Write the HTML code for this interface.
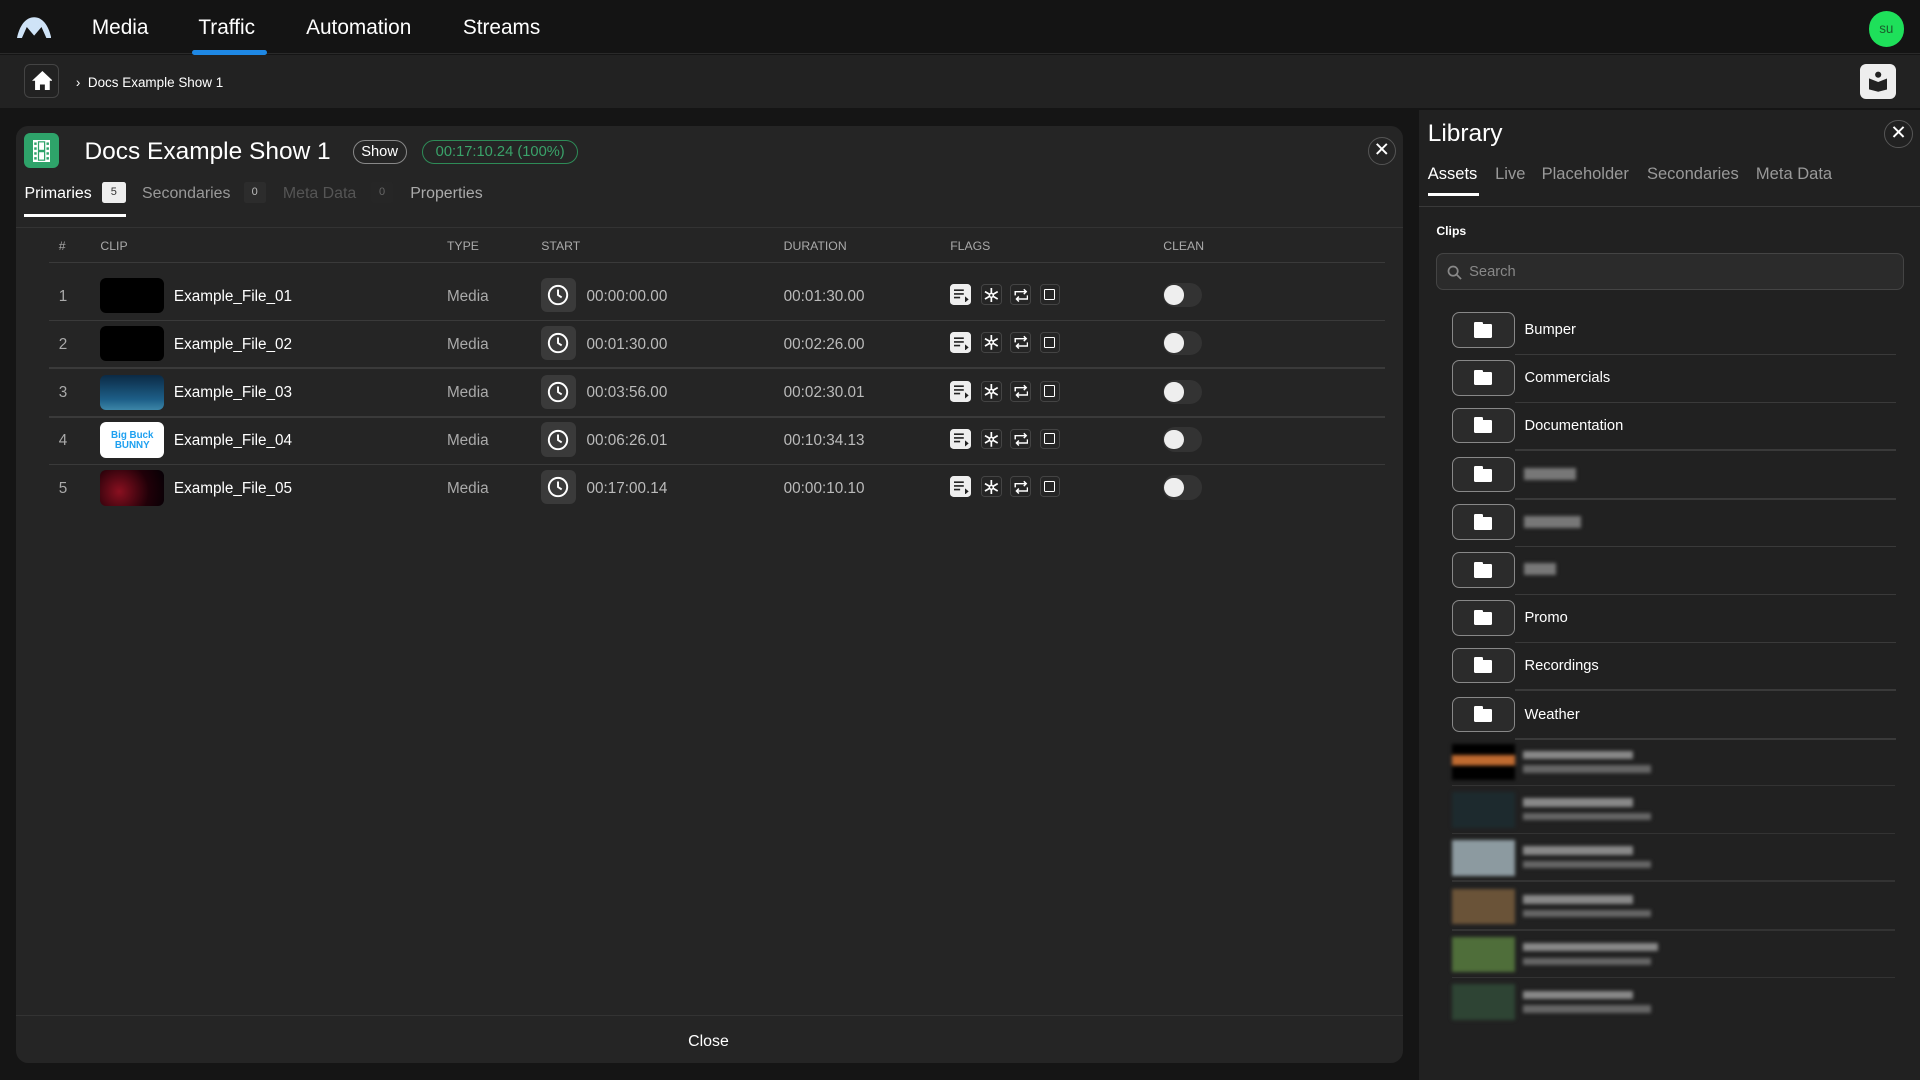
<!DOCTYPE html>
<html><head><meta charset="utf-8"><style>
html{zoom:1.22449}
*{box-sizing:border-box;margin:0;padding:0}
body{width:1568px;height:882px;background:#151515;font-family:"Liberation Sans",sans-serif;color:#fff;position:relative;overflow:hidden}
.a{position:absolute}
.nav{left:0;top:0;width:1568px;height:44px;background:#141414;border-bottom:1px solid #2a2a2a}
.nav span{position:absolute;top:13px;font-size:17px;color:#fff}
.crumb{left:0;top:45px;width:1568px;height:43px;background:#222}
.panel{left:13px;top:103px;width:1133px;height:765px;background:#252525;border-radius:10px}
.lib{left:1159px;top:90px;width:409px;height:792px;background:#212121}
.th{top:195px;font-size:10px;color:#aaa}
.row{font-size:12.5px}
.thumb{width:52px;height:29px;border-radius:5px;background:#000}
.clk{width:28px;height:28px;border-radius:5px;background:#3a3a3a}
.fl{width:17px;height:17px;border-radius:3px;border:1px solid #444}
.tg{width:32px;height:20px;border-radius:10px;background:#333}
.tg:before{content:"";position:absolute;left:1px;top:2px;width:16px;height:16px;border-radius:50%;background:#eee}
.fb{width:51px;height:29px;border:1px solid #888;border-radius:6px;background:#2b2b2b}
.fb:before{content:"";position:absolute;left:17px;top:9px;width:15px;height:11px;background:#fff;border-radius:1px}
.fb:after{content:"";position:absolute;left:17px;top:7px;width:7px;height:3px;background:#fff;border-radius:1px 1px 0 0}
.bl{filter:blur(1.5px)}
</style></head><body>
<div class="a nav">
<svg class="a" style="left:14px;top:13px" width="28" height="18" viewBox="0 0 28 18"><path d="M0 18 C2 8 7 1 14 1 C21 1 26 8 28 18 L24 18 L20 9 L14 16 L8 9 L4 18Z" fill="#cfe3f7"/></svg>
<span style="left:75px">Media</span><span style="left:162px">Traffic</span><span style="left:250px">Automation</span><span style="left:378px">Streams</span>
<div class="a" style="left:157px;top:41px;width:61px;height:4px;background:#1e88e5;border-radius:2px"></div>
<div class="a" style="left:1526px;top:9px;width:29px;height:29px;border-radius:50%;background:#1ee05a;color:#1a5e2d;font-size:11px;text-align:center;line-height:29px">su</div>
</div>
<div class="a crumb">
<div class="a" style="left:20px;top:7px;width:28px;height:28px;border:1px solid #444;border-radius:5px"><svg class="a" style="left:5px;top:5px" width="17" height="16" viewBox="0 0 17 16"><path d="M8.5 0 L17 8 L14.5 8 L14.5 16 L10.5 16 L10.5 11 L6.5 11 L6.5 16 L2.5 16 L2.5 8 L0 8Z" fill="#fff"/></svg></div>
<div class="a" style="left:62px;top:16px;font-size:11px">›&nbsp; Docs Example Show 1</div>
<div class="a" style="left:1519px;top:7px;width:29px;height:29px;background:#eee;border-radius:5px"><svg class="a" style="left:7px;top:6px" width="15" height="17" viewBox="0 0 15 17"><circle cx="7.5" cy="3" r="2.5" fill="#222"/><path d="M0 6 L7.5 9 L15 6 L15 15 L7.5 17 L0 15Z" fill="#222"/></svg></div>
</div>
<div class="a panel"></div>
<div class="a" style="left:20px;top:109px;width:28px;height:28px;background:#2ea36a;border-radius:5px"><svg class="a" style="left:7px;top:5px" width="14" height="18" viewBox="0 0 14 18"><rect width="14" height="18" fill="#fff"/><rect x="4" y="1" width="6" height="16" fill="#2ea36a"/><rect x="1" y="2" width="2" height="2" fill="#2ea36a"/><rect x="1" y="6" width="2" height="2" fill="#2ea36a"/><rect x="1" y="10" width="2" height="2" fill="#2ea36a"/><rect x="1" y="14" width="2" height="2" fill="#2ea36a"/><rect x="11" y="2" width="2" height="2" fill="#2ea36a"/><rect x="11" y="6" width="2" height="2" fill="#2ea36a"/><rect x="11" y="10" width="2" height="2" fill="#2ea36a"/><rect x="11" y="14" width="2" height="2" fill="#2ea36a"/><rect x="5" y="2" width="4" height="6" fill="#fff"/><rect x="5" y="10" width="4" height="6" fill="#fff"/></svg></div>
<div class="a" style="left:69px;top:113px;font-size:20px">Docs Example Show 1</div>
<div class="a" style="left:288px;top:114px;width:44px;height:20px;border:1px solid #888;border-radius:10px;font-size:12px;text-align:center;line-height:19px">Show</div>
<div class="a" style="left:345px;top:114px;width:127px;height:20px;border:1px solid #2e8b57;border-radius:10px;font-size:12px;color:#3aa36a;text-align:center;line-height:19px">00:17:10.24 (100%)</div>
<div class="a" style="left:1117px;top:112px;width:23px;height:23px;border:1px solid #555;border-radius:50%;text-align:center;line-height:21px;font-size:16px">✕</div>
<div class="a" style="left:20px;top:151px;font-size:13px">Primaries</div>
<div class="a" style="left:83px;top:149px;width:20px;height:17px;background:#eee;color:#333;border-radius:2px;font-size:9px;text-align:center;line-height:17px">5</div>
<div class="a" style="left:116px;top:151px;font-size:13px;color:#999">Secondaries</div>
<div class="a" style="left:199px;top:149px;width:18px;height:17px;background:#2c2c2c;color:#bbb;border-radius:2px;font-size:9px;text-align:center;line-height:17px">0</div>
<div class="a" style="left:231px;top:151px;font-size:13px;color:#555">Meta Data</div>
<div class="a" style="left:303px;top:149px;width:18px;height:17px;background:#262626;color:#666;border-radius:2px;font-size:9px;text-align:center;line-height:17px">0</div>
<div class="a" style="left:335px;top:151px;font-size:13px;color:#aaa">Properties</div>
<div class="a" style="left:20px;top:175px;width:83px;height:2px;background:#fff"></div>
<div class="a" style="left:13px;top:185px;width:1133px;height:1px;background:#333"></div>
<div class="a th" style="left:48px">#</div><div class="a th" style="left:82px">CLIP</div><div class="a th" style="left:365px">TYPE</div><div class="a th" style="left:442px">START</div><div class="a th" style="left:640px">DURATION</div><div class="a th" style="left:776px">FLAGS</div><div class="a th" style="left:950px">CLEAN</div>
<div class="a" style="left:40px;top:214px;width:1091px;height:1px;background:#3a3a3a"></div>
<div id="rows"></div>
<div class="a" style="left:13px;top:829px;width:1133px;height:1px;background:#333"></div>
<div class="a" style="left:562px;top:844px;font-size:13px">Close</div>

<div class="a lib"></div>
<div class="a" style="left:1166px;top:98px;font-size:20px">Library</div>
<div class="a" style="left:1539px;top:98px;width:23px;height:23px;border:1px solid #555;border-radius:50%;text-align:center;line-height:21px;font-size:16px">✕</div>
<div class="a" style="left:1166px;top:134px;font-size:13.5px">Assets</div>
<div class="a" style="left:1221px;top:134px;font-size:13.5px;color:#999">Live</div>
<div class="a" style="left:1259px;top:134px;font-size:13.5px;color:#999">Placeholder</div>
<div class="a" style="left:1345px;top:134px;font-size:13.5px;color:#999">Secondaries</div>
<div class="a" style="left:1434px;top:134px;font-size:13.5px;color:#999">Meta Data</div>
<div class="a" style="left:1166px;top:158px;width:42px;height:2px;background:#fff"></div>
<div class="a" style="left:1159px;top:168px;width:409px;height:1px;background:#3a3a3a"></div>
<div class="a" style="left:1173px;top:183px;font-size:10px;font-weight:bold">Clips</div>
<div class="a" style="left:1173px;top:207px;width:382px;height:30px;background:#2b2b2b;border:1px solid #444;border-radius:6px"><svg class="a" style="left:8px;top:9px" width="12" height="12" viewBox="0 0 12 12"><circle cx="5" cy="5" r="3.8" fill="none" stroke="#888" stroke-width="1.4"/><path d="M8 8 L11.5 11.5" stroke="#888" stroke-width="1.4"/></svg><span class="a" style="left:26px;top:8px;font-size:12px;color:#888">Search</span></div>
<div id="lib"></div>
<script>
var r='',ys=[241,280,320,359,398],st=['00:00:00.00','00:01:30.00','00:03:56.00','00:06:26.01','00:17:00.14'],du=['00:01:30.00','00:02:26.00','00:02:30.01','00:10:34.13','00:00:10.10'],
th=['#000','#000','linear-gradient(180deg,#0b2a45,#1d5f88 70%,#3d86a8)','#fff','radial-gradient(circle at 30% 60%,#8a1020,#200008 60%,#050005)'];
var snow='<svg class="a" style="left:2px;top:2px" width="12" height="12" viewBox="0 0 12 12"><g stroke="#fff" stroke-width="1.4" fill="none"><path d="M6 0V12M0.8 3L11.2 9M0.8 9L11.2 3"/></g><circle cx="6" cy="6" r="2.2" fill="#fff"/><circle cx="6" cy="6" r="1" fill="#252525"/></svg>';
for(var i=0;i<5;i++){var y=ys[i];
r+='<div class="a row" style="left:48px;top:'+(y-6)+'px;color:#aaa">'+(i+1)+'</div>';
r+='<div class="a thumb" style="left:82px;top:'+(y-14)+'px;background:'+th[i]+'">'+(i==3?'<div style="color:#1ea0f0;font-size:8px;font-weight:bold;text-align:center;line-height:8px;padding-top:7px">Big Buck<br>BUNNY</div>':'')+'</div>';
r+='<div class="a row" style="left:142px;top:'+(y-6)+'px">Example_File_0'+(i+1)+'</div>';
r+='<div class="a row" style="left:365px;top:'+(y-6)+'px;color:#aaa">Media</div>';
r+='<div class="a clk" style="left:442px;top:'+(y-14)+'px"><svg class="a" style="left:5px;top:5px" width="18" height="18" viewBox="0 0 18 18"><circle cx="9" cy="9" r="7.5" fill="none" stroke="#fff" stroke-width="1.6"/><path d="M9 4.5 V9 L12 11" fill="none" stroke="#fff" stroke-width="1.6"/></svg></div>';
r+='<div class="a row" style="left:479px;top:'+(y-6)+'px;color:#bbb">'+st[i]+'</div>';
r+='<div class="a row" style="left:640px;top:'+(y-6)+'px;color:#bbb">'+du[i]+'</div>';
r+='<div class="a fl" style="left:776px;top:'+(y-9)+'px;background:#eee;border-color:#eee"><svg class="a" style="left:2px;top:3px" width="13" height="11" viewBox="0 0 13 11"><path d="M0 1H8M0 4H8M0 7H5" stroke="#222" stroke-width="1.3"/><path d="M9 6 L12 8.5 L9 11Z" fill="#222"/></svg></div>';
r+='<div class="a fl" style="left:801px;top:'+(y-9)+'px">'+snow+'</div>';
r+='<div class="a fl" style="left:825px;top:'+(y-9)+'px"><svg class="a" style="left:2px;top:2px" width="12" height="12" viewBox="0 0 12 12"><path d="M1 6 V3 H10 M8 1 L10 3 L8 5 M11 6 V9 H2 M4 7 L2 9 L4 11" fill="none" stroke="#fff" stroke-width="1.2"/></svg></div>';
r+='<div class="a fl" style="left:849px;top:'+(y-9)+'px"><div class="a" style="left:3px;top:3px;width:9px;height:9px;border:1.5px solid #fff;border-radius:1px"></div></div>';
r+='<div class="a tg" style="left:950px;top:'+(y-10)+'px"></div>';
if(i<4)r+='<div class="a" style="left:40px;top:'+Math.round(y+20)+'px;width:1091px;height:1px;background:#3a3a3a"></div>';}
document.getElementById('rows').innerHTML=r;
var l='',n=['Bumper','Commercials','Documentation','','','','Promo','Recordings','Weather'],w=[0,0,0,42,46,26];
for(var j=0;j<9;j++){var y=Math.round(269+j*39.2);
l+='<div class="a fb" style="left:1186px;top:'+(y-14)+'px"></div>';
if(n[j])l+='<div class="a" style="left:1245px;top:'+(y-6)+'px;font-size:12px">'+n[j]+'</div>';
else l+='<div class="a bl" style="left:1245px;top:'+(y-5)+'px;width:'+w[j]+'px;height:10px;background:#777"></div>';
l+='<div class="a" style="left:1237px;top:'+(y+20)+'px;width:311px;height:1px;background:#3a3a3a"></div>';}
var tc=['linear-gradient(#000 30%,#c06a30 30%,#c06a30 60%,#000 60%)','#1d2a2e','#8c9aa0','#6a5338','#4f6e3a','#2e4434'];
for(var k=0;k<6;k++){var y=Math.round(622+k*39.2);
l+='<div class="a bl" style="left:1186px;top:'+(y-14)+'px;width:51px;height:29px;background:'+tc[k]+'"></div>';
l+='<div class="a bl" style="left:1244px;top:'+(y-9)+'px;width:'+(90+(k==4?20:0))+'px;height:7px;background:#888"></div>';
l+='<div class="a bl" style="left:1244px;top:'+(y+3)+'px;width:104px;height:6px;background:#666"></div>';
if(k<5)l+='<div class="a" style="left:1186px;top:'+(y+19)+'px;width:362px;height:1px;background:#333"></div>';}
document.getElementById('lib').innerHTML=l;
</script>
</body></html>
